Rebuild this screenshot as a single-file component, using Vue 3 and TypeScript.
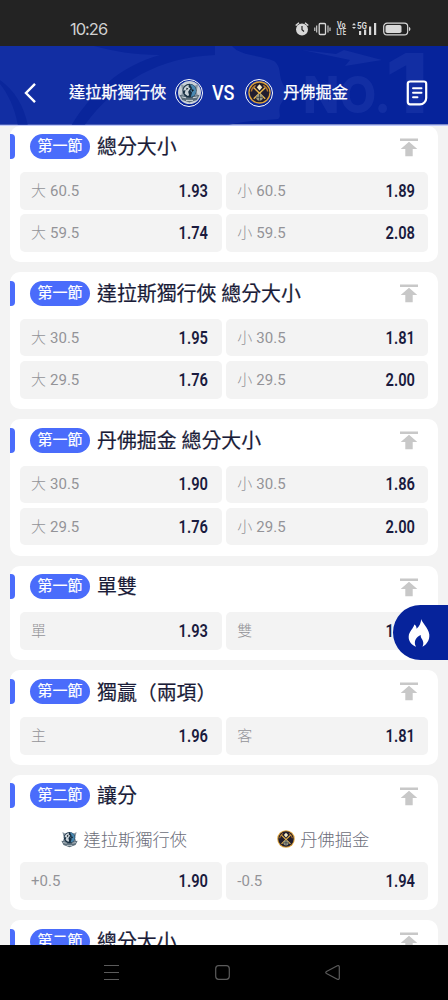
<script setup lang="ts">
interface Option {
  label: string
  num?: string
  odds: string
}
interface Market {
  period: string
  title: string
  teams?: boolean
  options: Option[]
}

const markets: Market[] = [
  {
    period: '第一節',
    title: '總分大小',
    options: [
      { label: '大', num: '60.5', odds: '1.93' },
      { label: '小', num: '60.5', odds: '1.89' },
      { label: '大', num: '59.5', odds: '1.74' },
      { label: '小', num: '59.5', odds: '2.08' },
    ],
  },
  {
    period: '第一節',
    title: '達拉斯獨行俠 總分大小',
    options: [
      { label: '大', num: '30.5', odds: '1.95' },
      { label: '小', num: '30.5', odds: '1.81' },
      { label: '大', num: '29.5', odds: '1.76' },
      { label: '小', num: '29.5', odds: '2.00' },
    ],
  },
  {
    period: '第一節',
    title: '丹佛掘金 總分大小',
    options: [
      { label: '大', num: '30.5', odds: '1.90' },
      { label: '小', num: '30.5', odds: '1.86' },
      { label: '大', num: '29.5', odds: '1.76' },
      { label: '小', num: '29.5', odds: '2.00' },
    ],
  },
  {
    period: '第一節',
    title: '單雙',
    options: [
      { label: '單', odds: '1.93' },
      { label: '雙', odds: '1.81' },
    ],
  },
  {
    period: '第一節',
    title: '獨贏（兩項）',
    options: [
      { label: '主', odds: '1.96' },
      { label: '客', odds: '1.81' },
    ],
  },
  {
    period: '第二節',
    title: '讓分',
    teams: true,
    options: [
      { label: '', num: '+0.5', odds: '1.90' },
      { label: '', num: '-0.5', odds: '1.94' },
    ],
  },
  {
    period: '第二節',
    title: '總分大小',
    options: [],
  },
]

// Full-width brackets use the face whose glyphs sit next to the enclosed text.
const pieces = (title: string): string[] => title.split(/([（）])/).filter(Boolean)
</script>

<template>
  <div class="phone">
    <svg class="defs" width="0" height="0">
      <defs>
        <symbol id="mavs" viewBox="0 0 24 24">
          <path d="M2 2l5 3h10l5-3-2 9 2 5-5 2-5 5-5-5-5-2 2-5z" fill="#8997a3" />
          <path d="M.5 14.500l6 1.500 5.500 2 5.500-2 6-1.500-3 6-8.500 3-8.500-3z" fill="#596b78" />
          <circle cx="12" cy="10" r="8" fill="#182f42" />
          <path d="M12.500 2.500c4.500.3 7 3.500 7 7.500s-2.500 6.500-6 7l1.500-5-2-2 2-3z" fill="#4a88b0" />
          <path d="M11 3c-3.500 1-6 3.500-6 7l2.500-1-1 4.500L10 16l1.500-1-1-4L13 7l-2-1z" fill="#c9d2d8" />
          <path d="M8.500 6.500l2.200 1-2.200 2zM14 8l3.200 1-2.200 2.500z" fill="#0d161e" />
          <path d="M3 17l5 1M16 18l5-1M8 21h8" stroke="#d3dce0" stroke-width="1.100" />
        </symbol>
        <symbol id="nuggets" viewBox="0 0 24 24">
          <circle cx="12" cy="12" r="11.700" fill="#dda33a" />
          <circle cx="12" cy="12" r="10.300" fill="#211d2e" />
          <path d="M5.500 6.500L18 18.500M18.500 6.500L6 18.500" stroke="#e9b64a" stroke-width="1.500" />
          <path d="M3.500 11c.3-3 2-5 4.500-6.500M20.500 11c-.3-3-2-5-4.500-6.500" stroke="#b6782f" stroke-width="1.500" fill="none" />
          <path d="M12 3.500l2.800 3L12 10 9.200 6.500z" fill="#f6ebc4" />
          <circle cx="12" cy="17" r="3.500" fill="#9b9b86" />
          <path d="M8.500 17h7M12 13.500v7" stroke="#2b3440" stroke-width=".8" />
        </symbol>
      </defs>
    </svg>

    <div class="status">
      <span class="clock">10:26</span>
      <svg class="sys" width="118" height="18" viewBox="0 0 118 18" fill="none">
        <g fill="#d8d8d8">
          <circle cx="7" cy="9.500" r="6" />
          <path d="M.7 5.500L4 2.700M13.300 5.500L10 2.700" stroke="#d8d8d8" stroke-width="1.500" />
          <path d="M7 6v3.800l2 1.700" stroke="#232323" stroke-width="1.200" fill="none" />
          <rect x="24.200" y="3.500" width="6.300" height="11" rx="1" fill="none" stroke="#d8d8d8" stroke-width="1.300" />
          <path d="M21.700 5.500v7M33 5.500v7M19.800 7.500v3.500M35 7.500v3.500" stroke="#d8d8d8" stroke-width="1.100" />
          <text x="42" y="8.300" class="tiny" textLength="8.500" lengthAdjust="spacingAndGlyphs">Vo</text>
          <text x="41.500" y="15.300" class="tiny" textLength="9.500" lengthAdjust="spacingAndGlyphs">LTE</text>
          <path d="M57 5.200l2-2.200 2 2.200zM57 7l2 2 2-2z" />
          <text x="62" y="8.600" class="tiny" textLength="10" lengthAdjust="spacingAndGlyphs">5G</text>
          <rect x="64" y="11" width="2.200" height="4" />
          <rect x="69" y="9.500" width="2.200" height="5.500" />
          <rect x="74" y="6.500" width="2.200" height="8.500" />
          <rect x="79" y="3" width="2.200" height="12" />
          <rect x="88.700" y="3.200" width="24" height="11.600" rx="3.400" fill="none" stroke="#d8d8d8" stroke-width="1.200" />
          <rect x="90.500" y="5" width="16" height="8" rx="1.800" />
          <path d="M114 7v4c1-.3 1.400-1 1.400-2s-.4-1.700-1.400-2z" />
        </g>
      </svg>
    </div>

    <header class="top">
      <svg class="backdrop" width="448" height="80" viewBox="0 0 448 80">
        <rect width="448" height="80" fill="#06239b" />
        <path d="M0 0H232C240 10 260 9 274 15C283 22 277 31 285 41C290 50 282 54 280 60C278 67 282 70 278 73C262 75 243 74 226 80H0z" fill="#122ea3" />
        <path d="M0 34C15 45 24 60 28 80H18C15 62 8 48 0 38z" fill="#0a269c" />
        <path d="M94 0H215V9C160 11 117 35 84 80H71C91 47 120 20 160 9C135 9 112 5 94 0z" fill="#09259b" />
        <path d="M302 4L336 8 344 4 382 14 345 20 350 14z" fill="#122ea3" />
        <text x="303" y="66.500" class="mark" textLength="88" lengthAdjust="spacingAndGlyphs">NO.</text>
        <text x="385" y="67" class="mark one" textLength="44" lengthAdjust="spacingAndGlyphs">1</text>
      </svg>
      <svg class="back" width="14" height="22" viewBox="0 0 14 22" fill="none" stroke="#fff" stroke-width="2.400"><path d="M11 1.800L2 11l9 9.200" /></svg>
      <div class="match">
        <span class="team home">達拉斯獨行俠</span>
        <span class="crest"><svg width="23" height="23" viewBox="0 0 23 23"><circle cx="11.500" cy="11.500" r="11.500" fill="#c9d0d8" /><use href="#mavs" x="1" y="1" width="21" height="21" /></svg></span>
        <span class="vs">VS</span>
        <span class="crest"><svg width="23" height="23"><use href="#nuggets" /></svg></span>
        <span class="team away">丹佛掘金</span>
      </div>
      <svg class="slip" width="22" height="26" viewBox="0 0 22 26" fill="none" stroke="#fff" stroke-width="2.200" stroke-linecap="round" stroke-linejoin="round">
        <path d="M4 1.500h14a2.200 2.200 0 0 1 2.200 2.200V18a6.300 6.300 0 0 1-6.300 6.300H4a2.200 2.200 0 0 1-2.200-2.200V3.700A2.200 2.200 0 0 1 4 1.500z" />
        <path d="M7 8.300h8.500M7 12.800h8.500M7 17.300h4.500" stroke-width="1.900" />
      </svg>
    </header>

    <main class="list">
      <section v-for="(m, i) in markets" :key="i" class="card">
        <div class="head">
          <i class="tab"></i>
          <span class="pill">{{ m.period }}</span>
          <h2><span v-for="(p, k) in pieces(m.title)" :key="k" :class="{ bracket: p === '（' || p === '）' }">{{ p }}</span></h2>
          <svg class="totop" width="18" height="19" viewBox="0 0 18 19" fill="#c8c8c8"><path d="M0 .5h18v2.500H0zM9 3.800l8.300 7.200h-4.600v7.200H5.300V11H.7z" /></svg>
        </div>
        <div v-if="m.teams" class="teams">
          <div><svg width="17" height="18"><use href="#mavs" /></svg><span>達拉斯獨行俠</span></div>
          <div><svg width="18" height="18"><use href="#nuggets" /></svg><span>丹佛掘金</span></div>
        </div>
        <div class="grid">
          <div v-for="(o, j) in m.options" :key="j" class="cell">
            <span class="label"><span v-if="o.label" class="han">{{ o.label }}</span><span>{{ o.num }}</span></span>
            <b>{{ o.odds }}</b>
          </div>
        </div>
      </section>
    </main>

    <div class="hot">
      <svg width="22" height="28" viewBox="0 0 22 28" fill="#fff">
        <path d="M13.200 0C13.500 3 20.500 9 21.300 15.500C21.800 21 18.800 25.500 14.500 27.700C16.300 24 14.800 21.500 13.600 19.500C13 18.500 12.500 17.300 12.800 16C8.500 17.500 5 22.500 8 27.700C3.500 26 .4 22 .7 17.500C1 12 5.500 9.700 6.300 5.500C8 6.500 8.600 8 8.600 9.800C11.500 7.300 13 4 13.200 0z" />
      </svg>
    </div>

    <nav class="sysnav">
      <svg width="448" height="55" viewBox="0 0 448 55" fill="none" stroke="#5b5b5b" stroke-width="1.200">
        <path d="M104 20.500h15M104 27.500h15M104 34.500h15" stroke-width="1" />
        <rect x="215.700" y="20.700" width="13.600" height="13.600" rx="3" />
        <path d="M326.500 26.500l10.800-5.700q2-.7 2 1.200v11q0 2-2 1.200l-10.800-5.700q-1.500-1 0-2z" />
      </svg>
    </nav>
  </div>
</template>

<style>
body {
  margin: 0;
  background: #f3f3f3;
}
</style>

<style scoped>
.phone {
  position: relative;
  width: 448px;
  height: 1000px;
  overflow: hidden;
  display: flex;
  flex-direction: column;
  background: #f3f3f3;
  font-family: Roboto, "Noto Sans CJK TC", sans-serif;
}
.defs {
  position: absolute;
}
.status {
  flex: none;
  height: 45.5px;
  background: #232323;
  display: flex;
  justify-content: space-between;
  padding: 0 35px 0 70px;
  color: #d0d0d0;
}
.clock {
  font: 400 16.5px/58px Inter, sans-serif;
  letter-spacing: -1px;
}
.sys {
  margin-top: 20px;
}
.tiny {
  font: 700 8.5px Roboto, sans-serif;
}
.top {
  position: relative;
  flex: none;
  box-sizing: border-box;
  height: 80px;
  display: flex;
  align-items: center;
  padding: 15px 20px 0 24px;
  color: #fff;
  border-bottom: 1px solid #c0c9fa;
}
.backdrop {
  position: absolute;
  left: 0;
  top: 0;
  clip-path: inset(0 0 1px 0);
}
.mark {
  font: 800 51px Inter, sans-serif;
  fill: #122ea3;
}
.mark.one {
  font-size: 83px;
}
.back,
.match,
.slip {
  position: relative;
}
.match {
  flex: 1;
  display: flex;
  align-items: center;
  margin-left: 31px;
}
.team {
  margin-top: 1px;
  font-size: 16.2px;
  line-height: 24px;
  font-weight: 400;
  -webkit-text-stroke: 0.25px #fff;
}
.crest {
  box-sizing: border-box;
  width: 28px;
  height: 28px;
  border-radius: 50%;
  border: 1.5px solid #fff;
  display: flex;
  align-items: center;
  justify-content: center;
  margin-left: 9px;
  background: #06239b;
}
.vs {
  margin: 0 0 0 9px;
  width: 24px;
  font-size: 20px;
  font-weight: 500;
  line-height: 24px;
  transform: scaleX(0.9);
  transform-origin: left;
}
.away {
  margin-left: 10px;
}
.list {
  height: 819.5px;
  flex: none;
  overflow: hidden;
  display: flex;
  flex-direction: column;
  gap: 10px;
  padding: 0 10px;
}
.card {
  flex: none;
  box-sizing: border-box;
  background: #fff;
  border-radius: 10px;
  padding: 0 10px 10.4px;
}
.head {
  display: flex;
  align-items: center;
  height: 42px;
  margin-bottom: 4.7px;
}
.tab {
  width: 5px;
  height: 25px;
  margin: 0 15px 0 -10px;
  background: #4a6cfb;
  border-radius: 0 4px 4px 0;
}
.pill {
  width: 60px;
  height: 25px;
  border-radius: 13px;
  background: #4a6cfb;
  color: #fff;
  font-size: 15px;
  line-height: 25px;
  text-align: center;
  -webkit-text-stroke: 0.2px #fff;
}
h2 {
  flex: 1;
  margin: 3px 0 0 7px;
  font-size: 19.9px;
  font-weight: 400;
  line-height: 30px;
  color: #1a1c38;
  -webkit-text-stroke: 0.2px #1a1c38;
}
.bracket {
  font-family: "Noto Sans CJK SC", sans-serif;
}
.totop {
  margin-right: 10px;
  margin-top: 1px;
}
.teams {
  display: grid;
  grid-template-columns: 1fr 1fr;
  height: 41.4px;
  margin-top: -0.7px;
  gap: 5px;
}
.teams div {
  display: flex;
  align-items: center;
  justify-content: center;
  gap: 5px;
  padding: 0 0 6px 7px;
  font-size: 17.3px;
  font-weight: 300;
  color: #6c6e7a;
}
.teams svg {
  margin-top: 1px;
}
.teams div + div {
  padding: 0 8px 6px 0;
}
.grid {
  display: grid;
  grid-template-columns: 1fr 1fr;
  gap: 4.7px;
}
.cell {
  box-sizing: border-box;
  height: 37.5px;
  border-radius: 5px;
  background: #f3f3f3;
  display: flex;
  align-items: center;
  justify-content: space-between;
  padding: 0 13.5px 0 11px;
}
.label {
  display: flex;
  gap: 4px;
  font-size: 15px;
  line-height: 22px;
  color: #939398;
}
.han {
  font-weight: 300;
}
b {
  font-size: 17.5px;
  line-height: 22px;
  font-weight: 600;
  color: #1a1b3e;
  transform: scaleX(0.84);
  transform-origin: right;
}
.hot {
  position: absolute;
  right: 0;
  top: 605px;
  box-sizing: border-box;
  width: 55px;
  height: 55px;
  padding: 14px 0 0 15px;
  border-radius: 27.5px 0 0 27.5px;
  background: #06239b;
}
.sysnav {
  flex: none;
  height: 55px;
  background: #000;
}
</style>
